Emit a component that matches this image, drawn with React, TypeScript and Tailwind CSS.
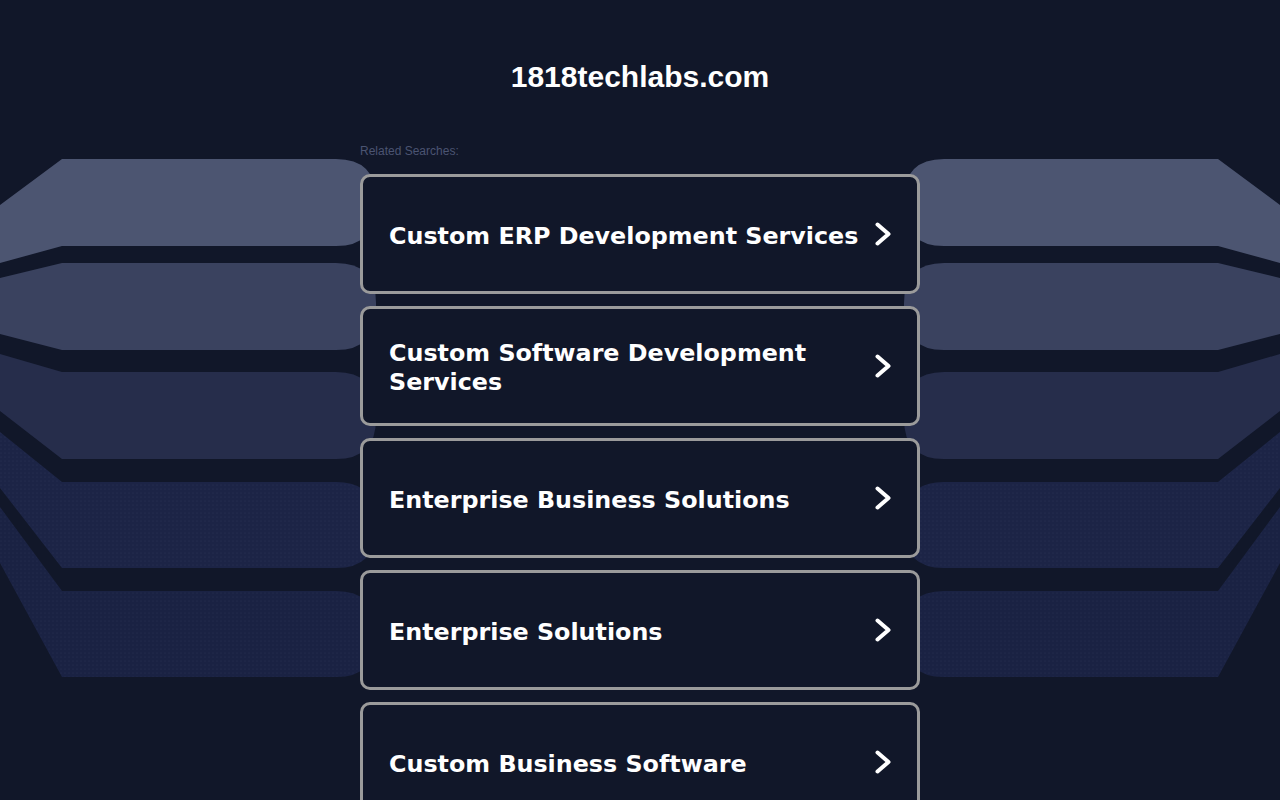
import React from "react";

const searches = [
  "Custom ERP Development Services",
  "Custom Software Development Services",
  "Enterprise Business Solutions",
  "Enterprise Solutions",
  "Custom Business Software",
];

// flat top/bottom at x=62, and where the slanted edge meets x=0
const bands = [
  { T: 159, B: 246, t0: 205, b0: 263, fill: "#4c5571" },
  { T: 263, B: 350, t0: 278, b0: 334, fill: "#3a425f" },
  { T: 372, B: 459, t0: 354, b0: 411, fill: "#262d4b" },
  { T: 482, B: 568, t0: 432, b0: 488, fill: "url(#dots4)" },
  { T: 591, B: 677, t0: 507, b0: 563, fill: "url(#dots5)" },
];

const r = 40;

function leftPath(b: (typeof bands)[number]) {
  const x = 376;
  return `M0,${b.t0} L62,${b.T} L${x - r},${b.T} Q${x},${b.T} ${x},${b.T + r} L${x},${b.B - r} Q${x},${b.B} ${x - r},${b.B} L62,${b.B} L0,${b.b0} Z`;
}

function rightPath(b: (typeof bands)[number]) {
  const x = 904;
  return `M1280,${b.t0} L1218,${b.T} L${x + r},${b.T} Q${x},${b.T} ${x},${b.T + r} L${x},${b.B - r} Q${x},${b.B} ${x + r},${b.B} L1218,${b.B} L1280,${b.b0} Z`;
}

function Backdrop() {
  return (
    <svg
      className="absolute top-0 left-0 w-[1280px] h-[800px]"
      viewBox="0 0 1280 800"
      aria-hidden="true"
    >
      <defs>
        <pattern id="dots4" width="4" height="4" patternUnits="userSpaceOnUse">
          <rect width="4" height="4" fill="#1c2446" />
          <circle cx="1" cy="1" r="0.6" fill="#283155" />
        </pattern>
        <pattern id="dots5" width="4" height="4" patternUnits="userSpaceOnUse">
          <rect width="4" height="4" fill="#1a2243" />
          <circle cx="1" cy="1" r="0.6" fill="#263053" />
        </pattern>
      </defs>
      {bands.map((b, i) => (
        <g key={i}>
          <path d={leftPath(b)} fill={b.fill} />
          <path d={rightPath(b)} fill={b.fill} />
        </g>
      ))}
    </svg>
  );
}

function Chevron() {
  return (
    <svg width="16" height="24" viewBox="0 0 16 24" className="shrink-0" fill="none">
      <path d="M2.5 2.5 L13.5 12 L2.5 21.5" stroke="#ffffff" strokeWidth="4" strokeLinecap="round" strokeLinejoin="round" />
    </svg>
  );
}

export default function App() {
  return (
    <div className="relative min-h-screen bg-[#111729] overflow-hidden">
      <Backdrop />

      <div className="relative flex flex-col items-center">
        <h1 className="mt-[62px] text-[30px] leading-none font-bold text-white font-['Liberation_Sans',Arial,sans-serif]">
          1818techlabs.com
        </h1>

        <div className="w-[560px] mt-[53px]">
          <p className="text-[12px] leading-none text-[#4b5472] font-['Liberation_Sans',Arial,sans-serif]">
            Related Searches:
          </p>

          <div className="mt-[17px] flex flex-col gap-3">
            {searches.map((s) => (
              <a
                key={s}
                href="#"
                className="h-[120px] flex items-center gap-[6px] pl-[26px] pr-[26px] bg-[#111729] border-[3px] border-[#9b9b9b] rounded-[10px]"
              >
                <span className="flex-1 pt-1 text-[23.8px] leading-[29px] font-bold text-white font-['DejaVu_Sans',Verdana,sans-serif]">
                  {s}
                </span>
                <Chevron />
              </a>
            ))}
          </div>
        </div>
      </div>
    </div>
  );
}
